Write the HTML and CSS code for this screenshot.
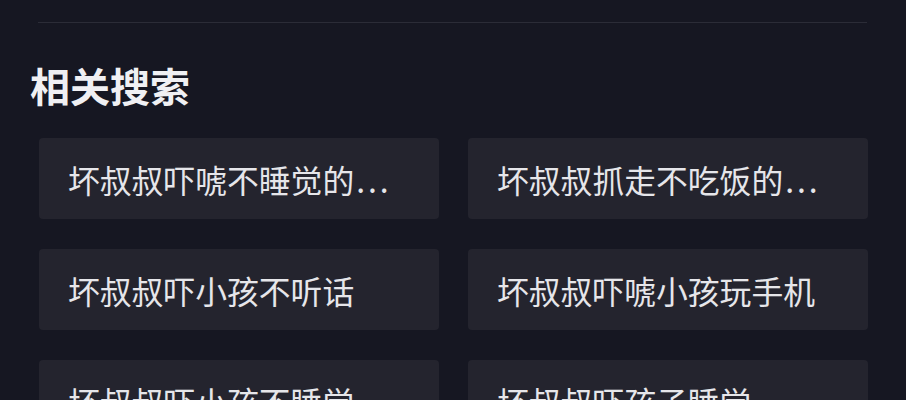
FILE: index.html
```html
<!DOCTYPE html>
<html lang="zh-CN">
<head>
<meta charset="utf-8">
<title>相关搜索</title>
<link rel="stylesheet" href="styles.css">
</head>
<body>
<div class="page">
  <div class="divider"></div>
  <h2 class="title">相关搜索</h2>
  <div class="grid">
    <div class="card">坏叔叔吓唬不睡觉的<span class="dots">...</span></div>
    <div class="card">坏叔叔抓走不吃饭的<span class="dots">...</span></div>
    <div class="card">坏叔叔吓小孩不听话</div>
    <div class="card">坏叔叔吓唬小孩玩手机</div>
    <div class="card">坏叔叔吓小孩不睡觉</div>
    <div class="card">坏叔叔吓孩子睡觉</div>
  </div>
</div>
</body>
</html>
```
FILE: styles.css
```css
html, body {
  margin: 0;
  padding: 0;
  background: #161722;
  height: 400px;
  overflow: hidden;
}
.page {
  padding: 22px 30px 0 30px;
  font-family: "Noto Sans CJK SC", "Noto Sans", sans-serif;
  color: #e8e8ec;
}
.divider {
  height: 1px;
  background: #2b2c37;
  margin: 0 9px 0 8px;
}
.title {
  margin: 38px 0 0 0;
  font-size: 40px;
  line-height: 48px;
  font-weight: 700;
  color: #f0f0f3;
}
.grid {
  display: grid;
  grid-template-columns: 400px 400px;
  column-gap: 29px;
  row-gap: 30px;
  margin-top: 29px;
  padding-left: 9px;
}
.card {
  height: 81px;
  background: #24242e;
  border-radius: 4px;
  padding-left: 29px;
  display: flex;
  align-items: center;
  font-size: 31.8px;
  white-space: nowrap;
  color: #e6e6ea;
}
.dots {
  letter-spacing: 3px;
  margin-left: 2px;
}
```
